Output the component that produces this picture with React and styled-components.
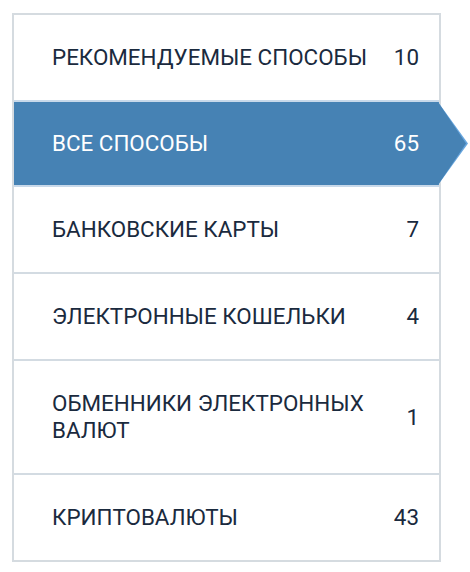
import React from 'react'
import styled, { createGlobalStyle, css } from 'styled-components'

const GlobalStyle = createGlobalStyle`
  * { box-sizing: border-box; }
  body {
    margin: 0;
    background: #ffffff;
    font-family: Roboto, "Noto Sans", "Liberation Sans", sans-serif;
  }
`

const Page = styled.div`
  padding: 13px 0 0 12px;
`

const Menu = styled.ul`
  width: 429px;
  margin: 0;
  padding: 0;
  list-style: none;
  border: 2px solid #d5dbe0;
  background: #ffffff;
`

const Item = styled.li`
  position: relative;
  display: flex;
  align-items: center;
  gap: 16px;
  padding: 29px 20px 29px 38px;
  font-size: 22.4px;
  line-height: 27px;
  color: #1a2a3e;
  border-top: 2px solid ${p => (p.$afterActive ? '#c8d9ea' : '#d3dbe2')};
  cursor: pointer;

  &:first-child {
    border-top: none;
  }

  ${p => p.$active && css`
    padding-top: 28px;
    padding-bottom: 28px;
    background: #4682b4;
    color: #ffffff;
    border-top-color: #c8d9ea;

    &::before,
    &::after {
      content: '';
      position: absolute;
      top: 0;
      bottom: 0;
      clip-path: polygon(0 0, 100% 50%, 0 100%);
    }

    &::before {
      left: calc(100% - 1px);
      width: 30px;
      background: #68a6de;
    }

    &::after {
      left: calc(100% - 1px);
      width: 28px;
      background: #4682b4;
    }
  `}
`

const Label = styled.span`
  flex: 1;
`

const Count = styled.span`
  flex: none;
  text-align: right;
`

const methods = [
  { name: 'РЕКОМЕНДУЕМЫЕ СПОСОБЫ', count: 10 },
  { name: 'ВСЕ СПОСОБЫ', count: 65, active: true },
  { name: 'БАНКОВСКИЕ КАРТЫ', count: 7 },
  { name: 'ЭЛЕКТРОННЫЕ КОШЕЛЬКИ', count: 4 },
  { name: 'ОБМЕННИКИ ЭЛЕКТРОННЫХ ВАЛЮТ', count: 1 },
  { name: 'КРИПТОВАЛЮТЫ', count: 43 },
]

const App = () => {
  return (
    <Page>
      <GlobalStyle />
      <Menu>
        {methods.map((m, i) => (
          <Item
            key={m.name}
            $active={m.active}
            $afterActive={i > 0 && methods[i - 1].active}
          >
            <Label>{m.name}</Label>
            <Count>{m.count}</Count>
          </Item>
        ))}
      </Menu>
    </Page>
  )
}

export default App
